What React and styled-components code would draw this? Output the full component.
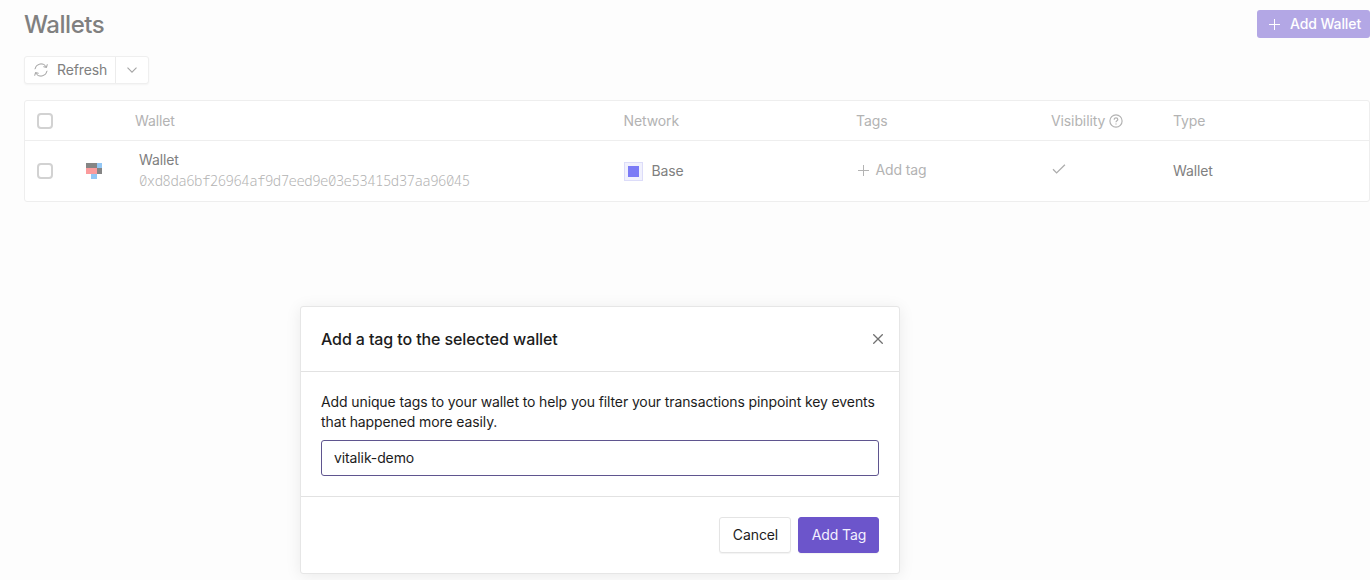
import React, { useState } from "react";
import styled, { createGlobalStyle } from "styled-components";

const columns = ["Wallet", "Network", "Tags", "Visibility", "Type"];

const wallets = [
  {
    address: "0xd8da6bf26964af9d7eed9e03e53415d37aa96045",
    name: "Wallet",
    network: "Base",
    type: "Wallet",
  },
];

const PlusIcon = () => (
  <Icon width="11" height="11" viewBox="0 0 11 11">
    <path d="M5.5 0V11M0 5.5H11" />
  </Icon>
);

const RefreshIcon = () => (
  <Icon width="14" height="14" viewBox="0 0 14 14">
    <path d="M0.9 6.2A6.1 6.1 0 0 1 12.4 4.3M13.1 7.8A6.1 6.1 0 0 1 1.6 9.7" />
    <path d="M13.3 1.3L12.5 4.4L9.4 3.7M0.7 12.7L1.5 9.6L4.6 10.3" />
  </Icon>
);

const HelpIcon = () => (
  <Icon width="14" height="14" viewBox="0 0 14 14" strokeWidth="1.2">
    <circle cx="7" cy="7" r="6.1" />
    <path d="M5.2 5.7C5.2 3.2 8.8 3.4 8.8 5.5C8.8 6.8 7 6.8 7 8.2M7 9.4V10.5" />
  </Icon>
);

const Blockie = () => (
  <Icon
    width="16"
    height="16"
    viewBox="0 0 16 16"
    stroke="none"
    shapeRendering="crispEdges"
  >
    <path fill="#858585" d="M0 0H11V5H16V11H11V5H0Z" />
    <path fill="#93c7f5" d="M11 0H16V5H11ZM5 11H11V16H5Z" />
    <path fill="#fb9b9c" d="M0 5H11V11H0Z" />
  </Icon>
);

export default function App() {
  const [tag, setTag] = useState("vitalik-demo");

  return (
    <Wrapper>
      <GlobalStyle />
      <Header>
        <Title>Wallets</Title>
        <AddWallet>
          <PlusIcon />
          Add Wallet
        </AddWallet>
      </Header>
      <SplitButton>
        <RefreshButton>
          <RefreshIcon />
          Refresh
        </RefreshButton>
        <MoreButton>
          <Icon width="10" height="6" viewBox="0 0 10 6" strokeWidth="1.1">
            <path d="M0.5 0.7L5 5.2L9.5 0.7" />
          </Icon>
        </MoreButton>
      </SplitButton>
      <Table>
        <HeadRow>
          <Checkbox />
          <span />
          {columns.map((title) => (
            <HeadCell key={title}>
              {title}
              {title === "Visibility" && <HelpIcon />}
            </HeadCell>
          ))}
        </HeadRow>
        {wallets.map((wallet) => (
          <Row key={wallet.address}>
            <Checkbox />
            <Blockie />
            <WalletCell>
              <span>{wallet.name}</span>
              <Address>{wallet.address}</Address>
            </WalletCell>
            <NetworkCell>
              <NetworkBadge />
              {wallet.network}
            </NetworkCell>
            <AddTag>
              <PlusIcon />
              Add tag
            </AddTag>
            <VisibleCell>
              <Icon width="14" height="10" viewBox="0 0 14 10" strokeWidth="1.3">
                <path d="M1 5.3L4.6 8.9L12.9 0.7" />
              </Icon>
            </VisibleCell>
            <span>{wallet.type}</span>
          </Row>
        ))}
      </Table>
      <Modal>
        <ModalHeader>
          <ModalTitle>Add a tag to the selected wallet</ModalTitle>
          <CloseButton>
            <Icon width="10" height="10" viewBox="0 0 10 10" strokeWidth="1.3">
              <path d="M0.3 0.3L9.7 9.7M9.7 0.3L0.3 9.7" />
            </Icon>
          </CloseButton>
        </ModalHeader>
        <ModalBody>
          <Text>
            Add unique tags to your wallet to help you filter your transactions
            pinpoint key events that happened more easily.
          </Text>
          <TagInput value={tag} onChange={(e) => setTag(e.target.value)} />
        </ModalBody>
        <ModalFooter>
          <ModalButton>Cancel</ModalButton>
          <ModalButton $primary>Add Tag</ModalButton>
        </ModalFooter>
      </Modal>
    </Wrapper>
  );
}

const GlobalStyle = createGlobalStyle`
  * {
    box-sizing: border-box;
  }
  body {
    background: #fdfdfd;
    margin: 0;
    overflow: hidden;
  }
  button, input {
    font: inherit;
    letter-spacing: inherit;
  }
`;

const Icon = styled.svg.attrs((props) => ({
  fill: "none",
  stroke: props.stroke || "currentColor",
}))`
  display: block;
  flex-shrink: 0;
`;
const Wrapper = styled.div`
  color: #808080;
  font-family: Inter, sans-serif;
  font-size: 14px;
  height: 580px;
  letter-spacing: -0.11px;
  line-height: 20px;
  padding: 10px 0 0 24px;
  width: 1370px;
`;
const Header = styled.header`
  align-items: flex-start;
  display: flex;
  height: 46px;
  justify-content: space-between;
`;
const Title = styled.h1`
  font-size: 24px;
  font-weight: 500;
  letter-spacing: -0.45px;
  line-height: 30px;
  margin: 0;
`;
const AddWallet = styled.button`
  align-items: center;
  background: #b3a7e5;
  border: none;
  border-radius: 3px;
  color: #fff;
  display: flex;
  font-weight: 500;
  gap: 10px;
  height: 28px;
  padding: 0 0 0 12px;
  white-space: nowrap;
  width: 113px;
`;
const SplitButton = styled.div`
  background: #fff;
  border: 1px solid #efefef;
  border-radius: 3px;
  box-shadow: 0 1px 2px rgba(0, 0, 0, 0.04);
  display: flex;
  height: 28px;
  width: 125px;
`;
const RefreshButton = styled.button`
  align-items: center;
  background: none;
  border: none;
  border-right: 1px solid #ececec;
  color: #808080;
  display: flex;
  gap: 9px;
  padding: 0 0 0 9px;
  width: 91px;

  svg {
    color: #a0a0a0;
  }
`;
const MoreButton = styled.button`
  align-items: center;
  background: none;
  border: none;
  color: #a5a5a5;
  display: flex;
  flex: 1;
  justify-content: center;
  padding: 0;
`;
const Table = styled.section`
  background: #fff;
  border: 1px solid #eee;
  border-radius: 3px;
  margin-top: 16px;
`;
const Row = styled.div`
  align-items: center;
  display: grid;
  grid-template-columns: 49px 49px 488.5px 232.5px 195px 122px 1fr;
  height: 60px;
  padding-left: 12px;
`;
const HeadRow = styled(Row)`
  border-bottom: 1px solid #eee;
  color: #b3b3b3;
  height: 40px;
`;
const HeadCell = styled.div`
  align-items: center;
  display: flex;
  gap: 4px;
`;
const Checkbox = styled.span`
  background: #fff;
  border: 2px solid #d2d2d2;
  border-radius: 4px;
  height: 16px;
  width: 16px;
`;
const WalletCell = styled.div`
  display: flex;
  flex-direction: column;
  line-height: 21px;
  padding: 0 0 2px 4px;
`;
const Address = styled.span`
  color: #b3b3b3;
  font-family: "Noto Sans Mono", "DejaVu Sans Mono", monospace;
  font-size: 14px;
  font-weight: 300;
  letter-spacing: -0.53px;
`;
const NetworkCell = styled.div`
  align-items: center;
  display: flex;
  gap: 9px;
`;
const NetworkBadge = styled.span`
  background: #7b7bf6;
  border: 1px solid #dcdcf9;
  box-shadow: inset 0 0 0 3px #f1f1fd;
  height: 19px;
  width: 19px;
`;
const AddTag = styled.div`
  align-items: center;
  color: #b3b3b3;
  display: flex;
  gap: 6.5px;
  padding: 0 0 2px 2px;
`;
const VisibleCell = styled.div`
  color: #adadad;
  padding: 0 0 5px 1px;
`;
const Modal = styled.div`
  background: #fff;
  border: 1px solid #e6e6e6;
  border-radius: 3px;
  box-shadow: 0 2px 16px rgba(0, 0, 0, 0.08);
  color: #1c1c1c;
  height: 268px;
  left: 300px;
  position: absolute;
  top: 306px;
  width: 600px;
`;
const ModalHeader = styled.div`
  align-items: center;
  border-bottom: 1px solid #e2e2e2;
  display: flex;
  height: 65px;
  justify-content: space-between;
  padding: 0 16px 0 20px;
`;
const ModalTitle = styled.h2`
  font-size: 16px;
  font-weight: 500;
  margin: 0;
`;
const CloseButton = styled.button`
  background: none;
  border: none;
  color: #707070;
  padding: 0;
`;
const ModalBody = styled.div`
  border-bottom: 1px solid #e2e2e2;
  height: 125px;
  padding: 20px;
`;
const Text = styled.p`
  margin: 0 0 8px;
`;
const TagInput = styled.input`
  background: #fff;
  border: 1px solid #5f558f;
  border-radius: 3px;
  color: #1c1c1c;
  display: block;
  height: 36px;
  outline: none;
  padding: 0 12px 1px;
  width: 100%;
`;
const ModalFooter = styled.div`
  display: flex;
  gap: 7px;
  justify-content: flex-end;
  padding: 20px;
`;
const ModalButton = styled.button`
  background: ${(props) => (props.$primary ? "#6c55cb" : "#fff")};
  border: 1px solid ${(props) => (props.$primary ? "#6c55cb" : "#e4e4e4")};
  border-radius: 3px;
  box-shadow: 0 1px 1px rgba(0, 0, 0, 0.05);
  color: ${(props) => (props.$primary ? "#f3f0ff" : "#1c1c1c")};
  height: 36px;
  padding: 0 0 0 1px;
  width: ${(props) => (props.$primary ? 81 : 72)}px;
`;
